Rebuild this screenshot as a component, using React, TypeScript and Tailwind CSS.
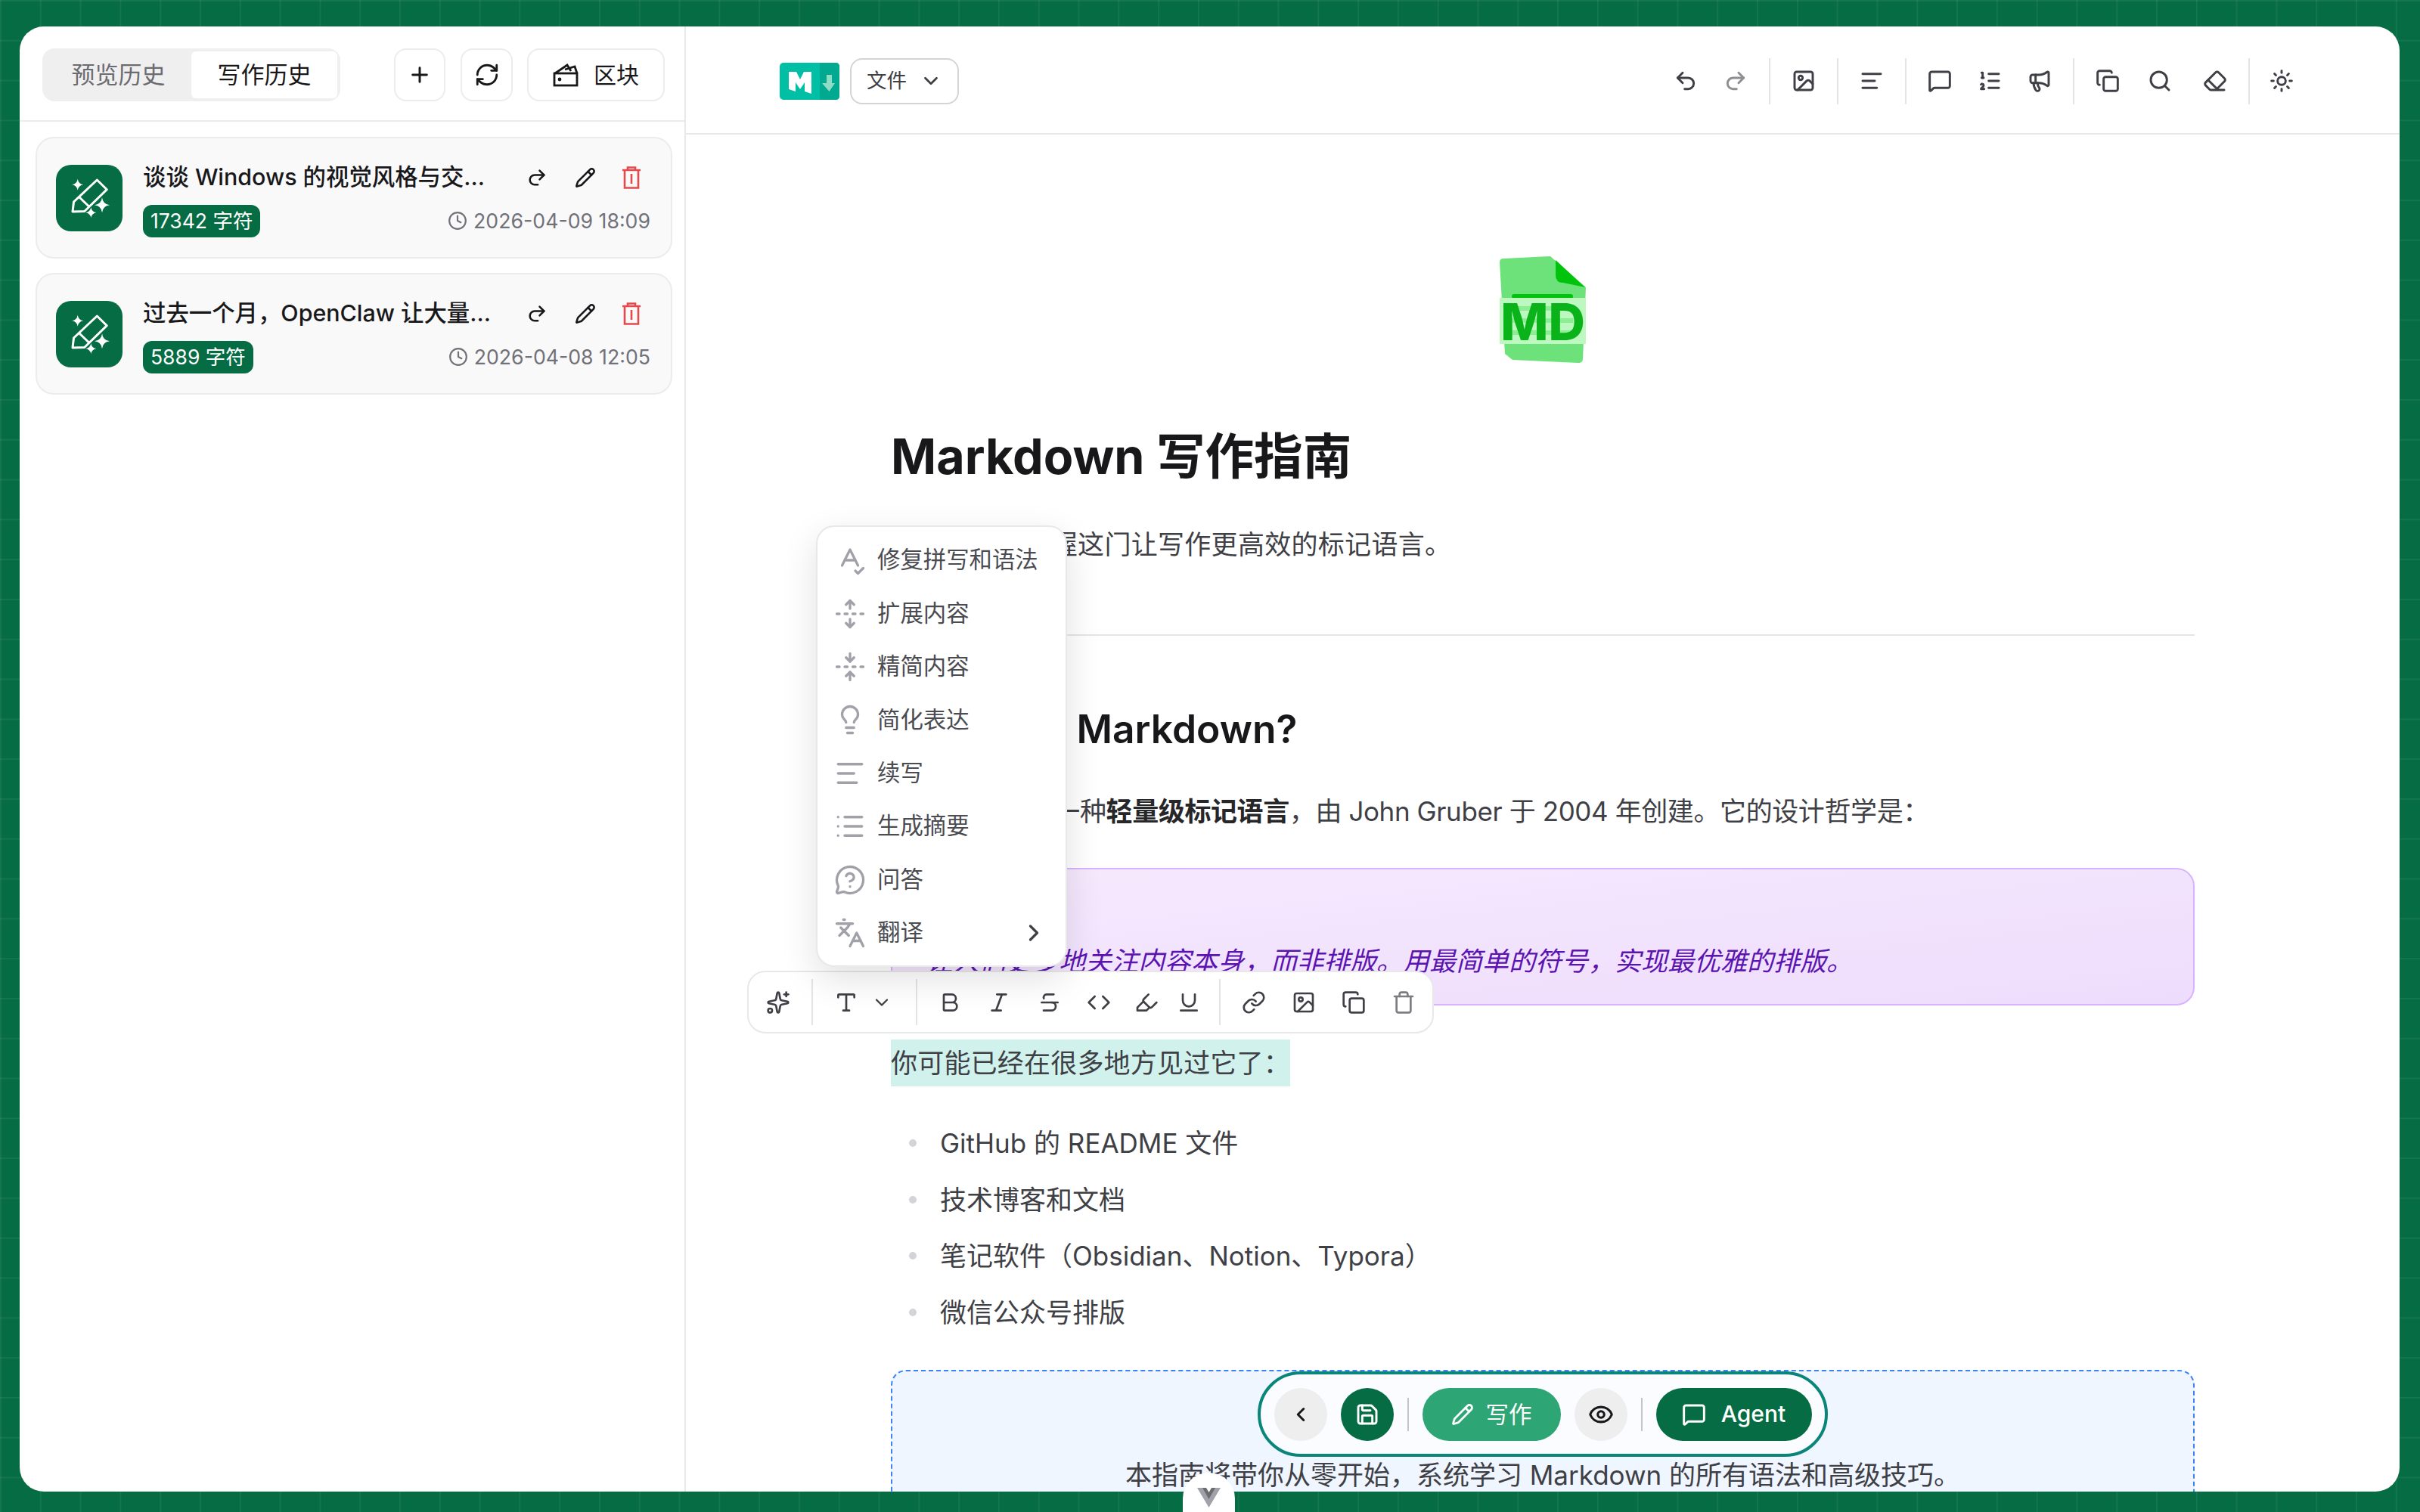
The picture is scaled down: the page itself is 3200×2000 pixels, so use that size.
import React from 'react';
import {
  Undo2, Redo2, Image, MessageSquare, ListOrdered, Megaphone, Copy, Search, Eraser, Sun,
  Pencil, Trash, RefreshCw, Plus, Clock, ChevronDown, ChevronLeft, ChevronRight,
  Save, Eye, SpellCheck, UnfoldVertical, FoldVertical, Lightbulb, AlignLeft, List,
  MessageCircleQuestion, Languages, Sparkles, Type, Bold, Italic, Strikethrough, Code,
  Highlighter, Underline, Link,
} from 'lucide-react';

const historyItems = [
  { title: '谈谈 Windows 的视觉风格与交...', count: '17342 字符', date: '2026-04-09 18:09' },
  { title: '过去一个月，OpenClaw 让大量...', count: '5889 字符', date: '2026-04-08 12:05' },
];

const menuItems = [
  { label: '修复拼写和语法', icon: SpellCheck },
  { label: '扩展内容', icon: UnfoldVertical },
  { label: '精简内容', icon: FoldVertical },
  { label: '简化表达', icon: Lightbulb },
  { label: '续写', icon: AlignLeft },
  { label: '生成摘要', icon: List },
  { label: '问答', icon: MessageCircleQuestion },
  { label: '翻译', icon: Languages },
];

function Sep({ className = 'h-[61px]' }: { className?: string }) {
  return <div className={`w-[2px] bg-[#e4e4e7] mx-[11px] ${className}`} />;
}

function BlockIcon() {
  return (
    <svg width="34" height="32" viewBox="0 0 34 32" fill="none" stroke="#18181b" strokeWidth="2.8">
      <rect x="2" y="14" width="30" height="16" />
      <path d="M3 14 L19 3 L24 11 M16 9 L29 5 L32 14" />
      <circle cx="9" cy="22" r="1" fill="#18181b" />
    </svg>
  );
}

function DeleteIcon() {
  return (
    <svg width="26" height="30" viewBox="0 0 26 30" fill="none" stroke="#e5484d" strokeWidth="2.6">
      <path d="M1 5 H25 M8 5 V1.5 H18 V5 M4 5 V28.5 H22 V5 M13 10 V23" />
    </svg>
  );
}

// four point star used by the history card icon
function star(cx: number, cy: number, r: number) {
  return `M${cx} ${cy - r} Q${cx + 1} ${cy - 1} ${cx + r} ${cy} Q${cx + 1} ${cy + 1} ${cx} ${cy + r} Q${cx - 1} ${cy + 1} ${cx - r} ${cy} Q${cx - 1} ${cy - 1} ${cx} ${cy - r}Z`;
}

function WritingIcon() {
  return (
    <svg width="88" height="88" viewBox="0 0 88 88" fill="none">
      <path d="M23.5 49 L54.3 20 L67.3 32.7 L37.7 61.5 L22 62Z" stroke="#fff" strokeWidth="3" strokeLinejoin="round" />
      <path d="M30.5 42.5 L43.5 55" stroke="#fff" strokeWidth="3" />
      <path d={star(28.7, 26.3, 7.5)} fill="#fff" />
      <path d={star(61, 53.3, 10)} fill="#fff" />
      <path d={star(46.3, 63.3, 7)} fill="#fff" />
    </svg>
  );
}

function MdFileIcon() {
  return (
    <svg width="114" height="141" viewBox="0 0 114 141" className="block mx-auto">
      <path d="M5 3 L67 0 L114 41 L110 136 Q110 141 104 141 L17 137 L7 129 L0 8 Q0 3 5 3Z" fill="#6ee27a" />
      <path d="M74 5 L113 41 L84 35 Q74 35 74 25Z" fill="#00c40c" />
      <rect x="16" y="50" width="81" height="6" rx="3" fill="#00c40c" />
      <rect x="0" y="55" width="114" height="61" fill="#bdf8c0" />
      <rect x="16" y="66" width="81" height="6" fill="#8cee93" />
      <rect x="16" y="82" width="81" height="6" fill="#8cee93" />
      <rect x="16" y="98" width="81" height="6" fill="#8cee93" />
      <text x="57" y="111" textAnchor="middle" fontSize="67" fontWeight="800" fill="#0ab31a" fontFamily="Inter, sans-serif">MD</text>
    </svg>
  );
}

function MarkdownLogo() {
  return (
    <svg width="79" height="49" viewBox="0 0 79 49">
      <rect width="79" height="49" rx="5" fill="#00bfa5" />
      <path d="M53 0 H74 Q79 0 79 5 V44 Q79 49 74 49 H53Z" fill="#00a98f" />
      <path d="M12 12 H22 L27 22 L32 12 H42 V41 L33 38 V26 L27 35 L21 26 V38 L12 35Z" fill="#fff" />
      <path d="M62 16 H69 V27 H73 L65.5 38 L56 27 H62Z" fill="#8fdcc6" />
    </svg>
  );
}

function Sidebar() {
  return (
    <aside className="w-[881px] shrink-0 border-r-2 border-[#e8e8e8] flex flex-col">
      <div className="h-[126px] border-b-2 border-[#ececec] flex items-start pt-[29px] pl-[30px]">
        <div className="w-[394px] h-[70px] rounded-[16px] bg-[#efefef] flex items-center text-[31px] p-[4px]">
          <div className="w-[193px] text-center text-[#6b6b70]">预览历史</div>
          <div className="w-[193px] h-[62px] bg-white rounded-[6px] flex items-center justify-center text-[#18181b]">写作历史</div>
        </div>
        <button className="ml-[71px] w-[68px] h-[70px] rounded-[16px] border-2 border-[#ececec] flex items-center justify-center">
          <Plus size={32} color="#18181b" strokeWidth={2.2} />
        </button>
        <button className="ml-[20px] w-[69px] h-[70px] rounded-[16px] border-2 border-[#ececec] flex items-center justify-center">
          <RefreshCw size={34} color="#18181b" strokeWidth={2} />
        </button>
        <button className="ml-[19px] w-[182px] h-[70px] rounded-[16px] border-2 border-[#ececec] flex items-center justify-center gap-[20px] text-[30px] text-[#18181b]">
          <BlockIcon />
          区块
        </button>
      </div>
      <div className="pt-[20px] pl-[21px] pr-[16px] flex flex-col gap-[19px]">
        {historyItems.map((item) => (
          <div key={item.title} className="h-[161px] rounded-[24px] border-2 border-[#ececec] bg-[#f9f9f9] pl-[25px] pr-[27px] flex items-center gap-[27px]">
            <div className="w-[88px] h-[88px] rounded-[20px] bg-[#056c43] flex items-center justify-center shrink-0">
              <WritingIcon />
            </div>
            <div className="flex-1 min-w-0 flex flex-col gap-[16px] pt-[6px]">
              <div className="flex items-center h-[40px]">
                <div className="flex-1 text-[30.4px] font-medium text-[#18181b] whitespace-nowrap">{item.title}</div>
                <div className="w-[42px] flex justify-center"><Redo2 size={28} color="#18181b" strokeWidth={2.2} /></div>
                <div className="w-[86px] flex justify-center"><Pencil size={28} color="#18181b" strokeWidth={2.2} /></div>
                <div className="w-[36px] flex justify-center mr-[7px]"><DeleteIcon /></div>
              </div>
              <div className="flex items-center justify-between">
                <span className="h-[43px] px-[10px] rounded-[12px] bg-[#056c43] text-white text-[26.5px] flex items-center">{item.count}</span>
                <span className="flex items-center gap-[8px] text-[26.7px] text-[#71717a]">
                  <Clock size={26} color="#71717a" strokeWidth={2} />
                  {item.date}
                </span>
              </div>
            </div>
          </div>
        ))}
      </div>
    </aside>
  );
}

function ToolSlot({ children, w = 'w-[66px]', className = '' }: { children: React.ReactNode; w?: string; className?: string }) {
  return <div className={`${w} ${className} flex items-center justify-center text-[#3f3f46]`}>{children}</div>;
}

function TopBar() {
  return (
    <div className="h-[143px] shrink-0 border-b-2 border-[#e8e8e8] flex items-center pt-[3px] pl-[124px] pr-[125px]">
      <MarkdownLogo />
      <button className="ml-[14px] w-[144px] h-[61px] rounded-[16px] border-2 border-[#d4d4d8] flex items-center justify-center gap-[17px] text-[26.5px] text-[#3f3f46]">
        文件
        <ChevronDown size={30} color="#3f3f46" strokeWidth={2.2} />
      </button>
      <div className="flex-1" />
      <ToolSlot><Undo2 size={32} strokeWidth={2.2} /></ToolSlot>
      <ToolSlot><Redo2 size={32} strokeWidth={2.2} color="#8e8e93" /></ToolSlot>
      <Sep />
      <ToolSlot><Image size={32} strokeWidth={2.2} /></ToolSlot>
      <Sep />
      <ToolSlot><AlignLeft size={32} strokeWidth={2.2} /></ToolSlot>
      <Sep />
      <ToolSlot><MessageSquare size={32} strokeWidth={2.2} /></ToolSlot>
      <ToolSlot><ListOrdered size={32} strokeWidth={2.2} /></ToolSlot>
      <ToolSlot><Megaphone size={32} strokeWidth={2.2} /></ToolSlot>
      <Sep />
      <ToolSlot><Copy size={32} strokeWidth={2.2} /></ToolSlot>
      <ToolSlot w="w-[72px]"><Search size={32} strokeWidth={2.2} /></ToolSlot>
      <ToolSlot className="ml-[4px]"><Eraser size={32} strokeWidth={2.2} /></ToolSlot>
      <Sep />
      <ToolSlot w="w-[62px]"><Sun size={32} strokeWidth={2.2} /></ToolSlot>
    </div>
  );
}

function AiMenu() {
  return (
    <div className="absolute z-20 left-[172px] top-[660px] w-[332px] h-[584px] bg-white rounded-[24px] border-2 border-[#e8e8e8] shadow-[0_16px_48px_rgba(0,0,0,0.12)] pt-[9px]">
      {menuItems.map((item, i) => {
        const Icon = item.icon;
        return (
          <div key={item.label} className="h-[70.4px] flex items-center pl-[22px] text-[30.4px] text-[#4b4b52]">
            <Icon size={42} color="#a1a1aa" strokeWidth={1.9} />
            <span className="ml-[15px] flex-1">{item.label}</span>
            {i === menuItems.length - 1 && <ChevronRight size={36} color="#3f3f46" strokeWidth={2.2} className="mr-[24px]" />}
          </div>
        );
      })}
    </div>
  );
}

function FloatingToolbar() {
  return (
    <div className="absolute z-10 left-[81px] top-[1249px] w-[908px] h-[83px] bg-white rounded-[24px] border-2 border-[#e8e8e8] flex items-center pl-[6px]">
      <ToolSlot><Sparkles size={32} strokeWidth={2} /></ToolSlot>
      <Sep />
      <ToolSlot><Type size={32} strokeWidth={2} /></ToolSlot>
      <ChevronDown size={28} color="#3f3f46" strokeWidth={2} />
      <div className="w-[20px]" />
      <Sep />
      <ToolSlot w="w-[63px]"><Bold size={32} strokeWidth={2} /></ToolSlot>
      <ToolSlot w="w-[67px]"><Italic size={32} strokeWidth={2} /></ToolSlot>
      <ToolSlot w="w-[67px]"><Strikethrough size={32} strokeWidth={2} /></ToolSlot>
      <ToolSlot w="w-[63px]"><Code size={32} strokeWidth={2} /></ToolSlot>
      <ToolSlot w="w-[63px]"><Highlighter size={32} strokeWidth={2} /></ToolSlot>
      <ToolSlot w="w-[49px]"><Underline size={32} strokeWidth={2} /></ToolSlot>
      <div className="w-[5px]" />
      <Sep />
      <ToolSlot><Link size={32} strokeWidth={2} /></ToolSlot>
      <ToolSlot><Image size={32} strokeWidth={2} /></ToolSlot>
      <ToolSlot><Copy size={32} strokeWidth={2} /></ToolSlot>
      <ToolSlot><Trash size={32} strokeWidth={2} color="#7c7c82" /></ToolSlot>
    </div>
  );
}

function BottomPill() {
  return (
    <div className="absolute z-30 left-[756px] top-[1779px] w-[754px] h-[113px] rounded-full border-4 border-[#0a857a] bg-[#fbfcff] flex items-center justify-center gap-[18px]">
      <button className="w-[70px] h-[70px] rounded-full bg-[#eeeeee] flex items-center justify-center">
        <ChevronLeft size={30} color="#18181b" strokeWidth={2.4} />
      </button>
      <button className="w-[70px] h-[70px] rounded-full bg-[#056c43] flex items-center justify-center">
        <Save size={32} color="#fff" strokeWidth={2.2} />
      </button>
      <div className="w-[2px] h-[44px] bg-[#c4c4c8]" />
      <button className="w-[183px] h-[70px] rounded-full bg-[#2ea574] flex items-center justify-center gap-[16px] text-[30.5px] text-white">
        <Pencil size={30} color="#fff" strokeWidth={2.2} />
        写作
      </button>
      <button className="w-[70px] h-[70px] rounded-full bg-[#eeeeee] flex items-center justify-center">
        <Eye size={34} color="#18181b" strokeWidth={2.2} />
      </button>
      <div className="w-[2px] h-[44px] bg-[#c4c4c8]" />
      <button className="w-[206px] h-[70px] rounded-full bg-[#056c43] flex items-center justify-center gap-[20px] text-[30px] font-medium text-white">
        <MessageSquare size={32} color="#fff" strokeWidth={2.2} />
        Agent
      </button>
    </div>
  );
}

function Article() {
  const bullets = ['GitHub 的 README 文件', '技术博客和文档', '笔记软件（Obsidian、Notion、Typora）', '微信公众号排版'];
  return (
    <div className="w-[1724px] mx-auto text-[35px] leading-[50px] text-[#3f3f46]">
      <div className="pt-[161px]"><MdFileIcon /></div>
      <h1 className="mt-[84px] text-[64.6px] leading-[80px] font-bold text-[#18181b]">Markdown 写作指南</h1>
      <p className="mt-[51px] tracking-[0.3px]">让我们一起掌握这门让写作更高效的标记语言。</p>
      <div className="mt-[94px] h-[2px] bg-[#e5e5e5]" />
      <h2 className="mt-[93px] pl-[78px] text-[51.5px] leading-[60px] font-semibold text-[#18181b]">什么是 Markdown?</h2>
      <p className="mt-[54px] tracking-[-0.4px]">Markdown 是一种<strong className="font-semibold text-[#27272a]">轻量级标记语言</strong>，由 John Gruber 于 2004 年创建。它的设计哲学是：</p>
      <div className="mt-[50px] h-[182px] rounded-[24px] border-2 border-[#d8b4fe] bg-gradient-to-br from-[#f6eafe] to-[#eedcfc] pt-[96px] pl-[45px] flex">
        <em className="text-[#5b14b0] whitespace-nowrap">让人们更多地关注内容本身，而非排版。用最简单的符号，实现最优雅的排版。</em>
      </div>
      <p className="mt-[45px]"><span className="inline-block h-[62px] leading-[62px] bg-[#d1f2ec] tracking-[0.2px]">你可能已经在很多地方见过它了：</span></p>
      <ul className="mt-[50px] flex flex-col gap-[24.5px]">
        {bullets.map((b) => (
          <li key={b} className="flex items-center pl-[24px]">
            <span className="w-[10px] h-[10px] rounded-full bg-[#d4d4d8] mr-[31px]" />
            {b}
          </li>
        ))}
      </ul>
      <div className="mt-[51px] h-[300px] rounded-t-[20px] border-2 border-dashed border-[#3b82f6] bg-[#eff6ff] pt-[112px] text-center">
        本指南将带你从零开始，系统学习 Markdown 的所有语法和高级技巧。
      </div>
    </div>
  );
}

export default function App() {
  return (
    <div className="relative w-[3200px] h-[2000px] overflow-hidden bg-[#056c43] bg-[linear-gradient(rgba(255,255,255,0.06)_2px,transparent_2px),linear-gradient(90deg,rgba(255,255,255,0.06)_2px,transparent_2px)] bg-[size:52.8px_52.8px] pt-[35px] pl-[26px] pr-[27px] pb-[27px] [font-family:Inter,'Noto_Sans_CJK_SC',sans-serif]">
      <div className="w-full h-full bg-white rounded-[32px] overflow-hidden flex">
        <Sidebar />
        <main className="relative flex-1 min-w-0 flex flex-col overflow-hidden">
          <TopBar />
          <div className="flex-1 min-h-0 overflow-hidden">
            <Article />
          </div>
          <AiMenu />
          <FloatingToolbar />
          <BottomPill />
        </main>
      </div>
      <div className="absolute left-[1564px] top-[1948px] w-[69px] h-[52px] bg-white rounded-t-[34px] flex items-start justify-center pt-[20px]">
        <svg width="31" height="26" viewBox="0 0 31 26">
          <path d="M0 0 H31 L15.5 26Z" fill="#a1a1aa" />
          <path d="M7 0 H24 L15.5 15Z" fill="#6b6b70" />
          <path d="M12 0 H19 L15.5 6Z" fill="#fff" />
        </svg>
      </div>
    </div>
  );
}
